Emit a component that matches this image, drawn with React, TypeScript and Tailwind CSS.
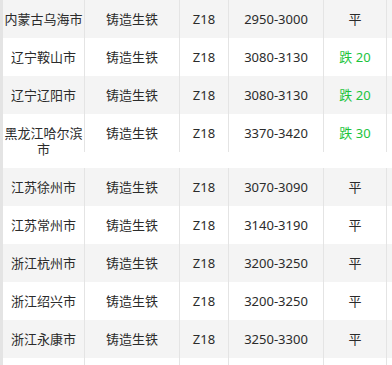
import React from "react";

type Row = { city: string; type: string; grade: string; price: string; change: string };

const rows: Row[] = [
  { city: "内蒙古乌海市", type: "铸造生铁", grade: "Z18", price: "2950-3000", change: "平" },
  { city: "辽宁鞍山市", type: "铸造生铁", grade: "Z18", price: "3080-3130", change: "跌 20" },
  { city: "辽宁辽阳市", type: "铸造生铁", grade: "Z18", price: "3080-3130", change: "跌 20" },
  { city: "黑龙江哈尔滨市", type: "铸造生铁", grade: "Z18", price: "3370-3420", change: "跌 30" },
  { city: "江苏徐州市", type: "铸造生铁", grade: "Z18", price: "3070-3090", change: "平" },
  { city: "江苏常州市", type: "铸造生铁", grade: "Z18", price: "3140-3190", change: "平" },
  { city: "浙江杭州市", type: "铸造生铁", grade: "Z18", price: "3200-3250", change: "平" },
  { city: "浙江绍兴市", type: "铸造生铁", grade: "Z18", price: "3200-3250", change: "平" },
  { city: "浙江永康市", type: "铸造生铁", grade: "Z18", price: "3250-3300", change: "平" },
  { city: "", type: "", grade: "", price: "", change: "" },
];

export default function App() {
  return (
    <div
      className="w-[392px] h-[365px] overflow-hidden bg-white text-[13px] text-[#2b2b2b]"
      style={{ fontFamily: '"Noto Sans", "Noto Sans CJK SC", sans-serif' }}
    >
      {rows.map((r, i) => (
        <div
          key={i}
          className={`flex items-start ${i % 2 === 0 ? "bg-[#f4f4f4]" : "bg-white"}`}
        >
          <div className="w-[84px] h-auto min-h-[38px] shrink-0 border-l-[3px] border-[#e4e4e4] py-[11px] leading-[16px] text-center px-[1px]">
            {r.city}
          </div>
          <div className="w-[95px] min-h-[38px] shrink-0 border-l border-[#e4e4e4] py-[11px] leading-[16px] text-center">
            {r.type}
          </div>
          <div className="w-[49px] min-h-[38px] shrink-0 border-l border-[#e4e4e4] py-[11px] leading-[16px] text-center">
            {r.grade}
          </div>
          <div className="w-[95px] min-h-[38px] shrink-0 border-l border-[#e4e4e4] py-[11px] leading-[16px] text-center">
            {r.price}
          </div>
          <div
            className={`w-[64px] min-h-[38px] shrink-0 border-l border-r border-[#e4e4e4] py-[11px] leading-[16px] text-center ${
              r.change.startsWith("跌") ? "text-[#1cc43c]" : "text-[#2b2b2b]"
            }`}
          >
            {r.change}
          </div>
        </div>
      ))}
    </div>
  );
}
